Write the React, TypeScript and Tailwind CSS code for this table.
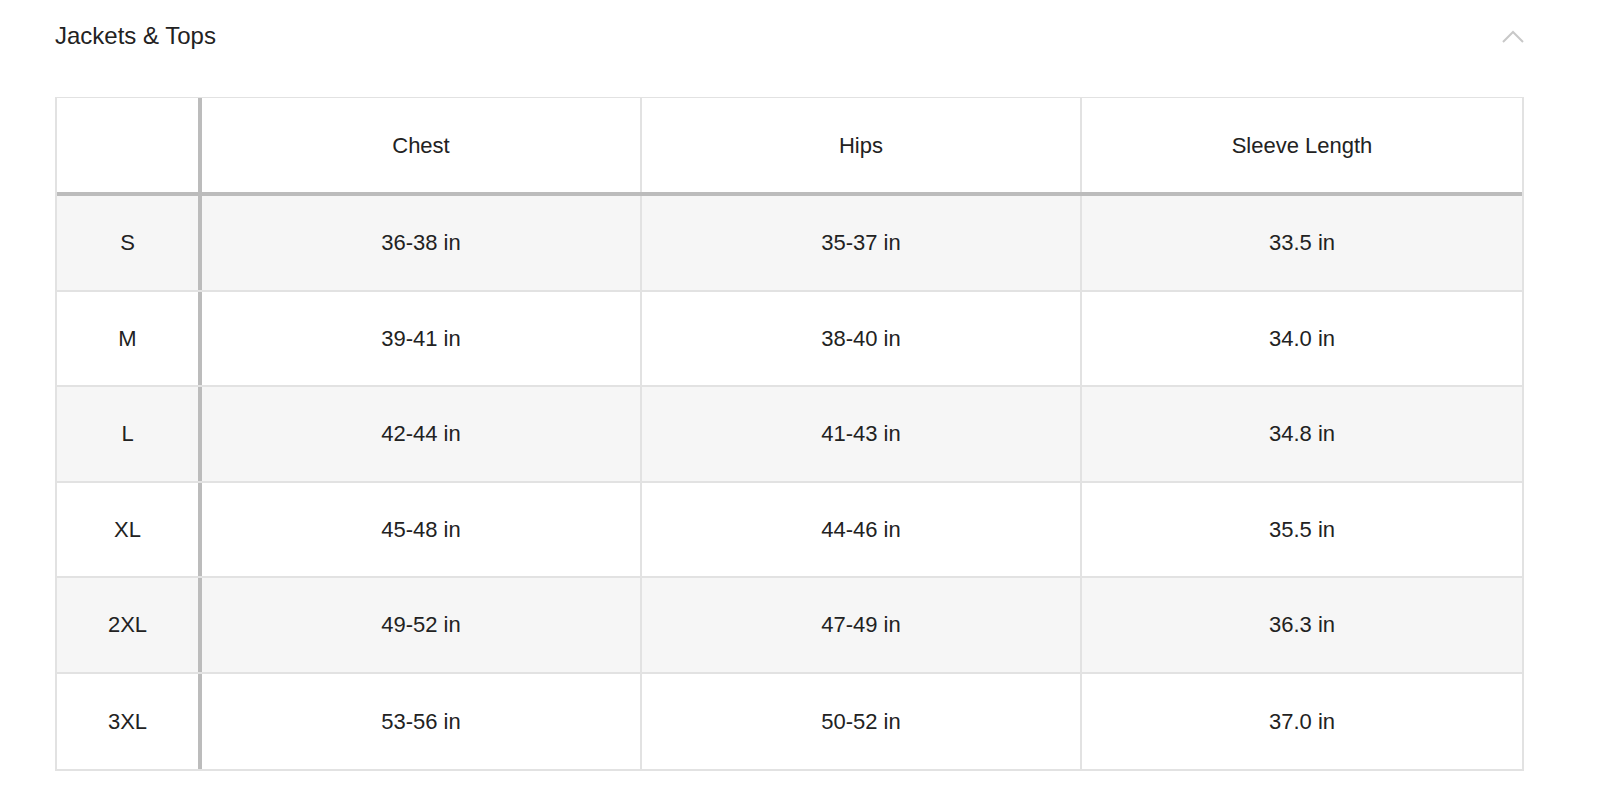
import React from "react";

const rows = [
  { size: "S", chest: "36-38 in", hips: "35-37 in", sleeve: "33.5 in" },
  { size: "M", chest: "39-41 in", hips: "38-40 in", sleeve: "34.0 in" },
  { size: "L", chest: "42-44 in", hips: "41-43 in", sleeve: "34.8 in" },
  { size: "XL", chest: "45-48 in", hips: "44-46 in", sleeve: "35.5 in" },
  { size: "2XL", chest: "49-52 in", hips: "47-49 in", sleeve: "36.3 in" },
  { size: "3XL", chest: "53-56 in", hips: "50-52 in", sleeve: "37.0 in" },
];

export default function App() {
  return (
    <div
      className="min-h-screen bg-white text-[#222] pl-[55px]"
      style={{ fontFamily: '"Liberation Sans", Arial, sans-serif' }}
    >
      <div className="w-[1469px]">
        {/* header */}
        <div className="flex items-center justify-between h-[72px]">
          <h2 className="text-[24px] leading-none font-normal">Jackets &amp; Tops</h2>
          <svg width="22" height="13" viewBox="0 0 22 13" className="mt-[1px]">
            <polyline points="1,12 11,2 21,12" fill="none" stroke="#c8c8c8" strokeWidth="2" />
          </svg>
        </div>

        {/* table */}
        <div className="mt-[25px] border-t border-l-2 border-r-2 border-b-2 border-[#e2e2e2] text-[22px]">
          <div className="grid grid-cols-[145px_1fr_1fr_1fr] h-[98px] border-b-4 border-[#bcbcbc]">
            <div className="border-r-4 border-[#bcbcbc]" />
            <div className="flex items-center justify-center border-r-2 border-[#e2e2e2]">Chest</div>
            <div className="flex items-center justify-center border-r-2 border-[#e2e2e2]">Hips</div>
            <div className="flex items-center justify-center">Sleeve Length</div>
          </div>
          {rows.map((r, i) => (
            <div
              key={r.size}
              className={`grid grid-cols-[145px_1fr_1fr_1fr] h-[95.5px] ${
                i < rows.length - 1 ? "border-b-2 border-[#e2e2e2]" : ""
              } ${i % 2 === 0 ? "bg-[#f6f6f6]" : "bg-white"}`}
            >
              <div className="flex items-center justify-center border-r-4 border-[#bcbcbc]">{r.size}</div>
              <div className="flex items-center justify-center border-r-2 border-[#e2e2e2]">{r.chest}</div>
              <div className="flex items-center justify-center border-r-2 border-[#e2e2e2]">{r.hips}</div>
              <div className="flex items-center justify-center">{r.sleeve}</div>
            </div>
          ))}
        </div>
      </div>
    </div>
  );
}
